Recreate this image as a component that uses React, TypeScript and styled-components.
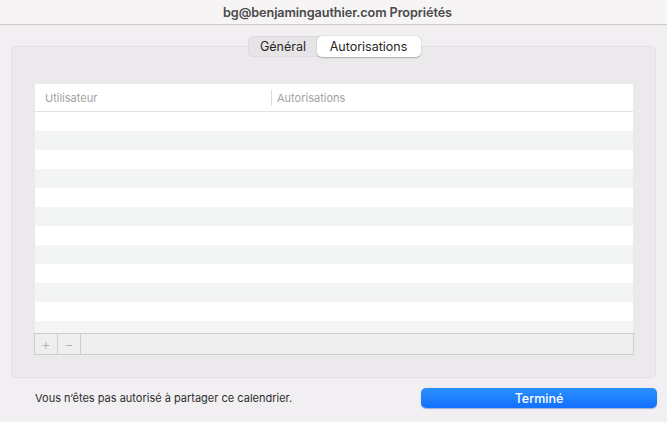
import React from "react";
import styled, { createGlobalStyle } from "styled-components";

const Global = createGlobalStyle`
  html, body { margin: 0; padding: 0; background: #f1eff1; }
  body { font-family: Inter, "Noto Sans", "Liberation Sans", sans-serif; -webkit-font-smoothing: antialiased; }
`;

const Window = styled.div`
  width: 667px;
  height: 422px;
  display: flex;
  flex-direction: column;
  background: #f1eff1;
  overflow: hidden;
`;

const TitleBar = styled.div`
  height: 24px;
  flex: none;
  display: flex;
  align-items: center;
  justify-content: center;
  background: #f6f4f4;
  border-bottom: 1px solid #cbc9c9;
  font-size: 12.7px;
  font-weight: 600;
  color: #4a4a4a;
  letter-spacing: -0.1px;
  padding-left: 8px;
`;

const Body = styled.div`
  flex: 1;
  display: flex;
  flex-direction: column;
  padding-top: 11px;
`;

const Tabs = styled.div`
  align-self: center;
  position: relative;
  z-index: 1;
  display: flex;
  height: 21px;
  box-sizing: border-box;
  margin-left: 1px;
  margin-bottom: -11px;
  background: #e6e4e6;
  border: 1px solid #dddbdd;
  border-radius: 5px;
`;

const Tab = styled.div<{ $active?: boolean }>`
  display: flex;
  align-items: center;
  justify-content: center;
  width: ${(p) => (p.$active ? "104px" : "71px")};
  margin: -1px;
  font-size: 12.5px;
  color: #262626;
  background: ${(p) => (p.$active ? "#ffffff" : "transparent")};
  border-radius: 5px;
  box-shadow: ${(p) => (p.$active ? "0 0.5px 1.5px rgba(0,0,0,0.28)" : "none")};
`;

const Group = styled.div`
  margin: 0 11px;
  box-sizing: border-box;
  background: #ebe9eb;
  border: 1px solid #e2e0e2;
  border-radius: 5px;
  padding: 37px 22px 22px 23px;
`;

const TableView = styled.div`
  display: flex;
  flex-direction: column;
  width: 598px;
`;

const Header = styled.div`
  height: 28px;
  box-sizing: border-box;
  display: flex;
  align-items: center;
  background: #ffffff;
  border-bottom: 1px solid #e3e3e3;
  font-size: 11px;
  color: #a2a2a2;
`;

const HeaderCell = styled.div<{ $w?: number; $divider?: boolean }>`
  ${(p) => (p.$w ? `width: ${p.$w}px; flex: none;` : "flex: 1;")}
  box-sizing: border-box;
  padding-left: ${(p) => (p.$divider ? "5px" : "10px")};
  border-left: ${(p) => (p.$divider ? "1px solid #dcdcdc" : "none")};
  line-height: 16px;
`;

const Rows = styled.div`
  height: 221px;
  overflow: hidden;
  display: flex;
  flex-direction: column;
`;

const Row = styled.div<{ $odd: boolean }>`
  height: 19px;
  flex: none;
  background: ${(p) => (p.$odd ? "#f3f4f4" : "#ffffff")};
`;

const BottomBar = styled.div`
  height: 22px;
  box-sizing: border-box;
  margin: 0 -1px;
  display: flex;
  background: #f0eff0;
  border: 1px solid #cdcdcd;
`;

const BarButton = styled.div`
  width: 22px;
  flex: none;
  display: flex;
  align-items: center;
  justify-content: center;
  border-right: 1px solid #cdcdcd;
  color: #b4b4b4;
  font-size: 15px;
  font-weight: 300;
  line-height: 1;
`;

const Footer = styled.div`
  flex: 1;
  display: flex;
  align-items: flex-start;
  justify-content: space-between;
  padding: 10px 10px 0 35px;
`;

const Message = styled.div`
  font-size: 11px;
  color: #2e2e2e;
  line-height: 20px;
`;

const DoneButton = styled.div`
  width: 236px;
  height: 20px;
  box-sizing: border-box;
  display: flex;
  align-items: center;
  justify-content: center;
  border-radius: 5px;
  background: linear-gradient(#2b90fd, #1270fe);
  box-shadow: 0 0.5px 1px rgba(0, 60, 160, 0.35);
  color: #ffffff;
  font-size: 12.5px;
  font-weight: 500;
`;

export default function App() {
  const rows = Array.from({ length: 12 }, (_, i) => i);
  return (
    <>
      <Global />
      <Window>
        <TitleBar>bg@benjamingauthier.com Propriétés</TitleBar>
        <Body>
          <Tabs>
            <Tab>Général</Tab>
            <Tab $active>Autorisations</Tab>
          </Tabs>
          <Group>
            <TableView>
              <Header>
                <HeaderCell $w={236}>Utilisateur</HeaderCell>
                <HeaderCell $divider>Autorisations</HeaderCell>
              </Header>
              <Rows>
                {rows.map((i) => (
                  <Row key={i} $odd={i % 2 === 1} />
                ))}
              </Rows>
              <BottomBar>
                <BarButton>+</BarButton>
                <BarButton>−</BarButton>
              </BottomBar>
            </TableView>
          </Group>
          <Footer>
            <Message>Vous n’êtes pas autorisé à partager ce calendrier.</Message>
            <DoneButton>Terminé</DoneButton>
          </Footer>
        </Body>
      </Window>
    </>
  );
}
